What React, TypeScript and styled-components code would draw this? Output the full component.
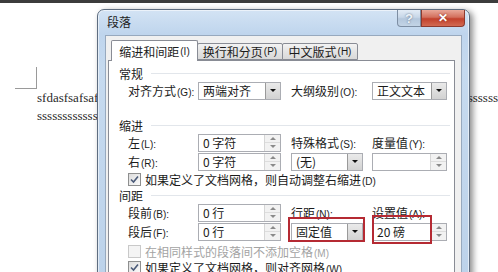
import React from 'react'
import styled, { createGlobalStyle } from 'styled-components'

const GlobalStyle = createGlobalStyle`
  html, body {
    margin: 0;
    padding: 0;
  }
  body {
    width: 498px;
    height: 272px;
    overflow: hidden;
    background: #ffffff;
    font-family: "Noto Sans CJK SC", "Liberation Sans", sans-serif;
  }
`

const Screen = styled.div`
  position: relative;
  width: 498px;
  height: 272px;
  overflow: hidden;
  background: #ffffff;
`

const TopStrip = styled.div`
  height: 3px;
  background: #3c3c3c;
`

const Doc = styled.div`
  padding: 64px 0 0 15px;
`

const CornerMark = styled.div`
  width: 21px;
  height: 21px;
  border-right: 1px solid #9a9a9a;
  border-bottom: 1px solid #9a9a9a;
`

const DocLine = styled.div`
  margin-left: 22px;
  height: 18px;
  line-height: 18px;
  font-family: "Liberation Serif", serif;
  font-size: 13px;
  color: #2a2a2a;
  white-space: nowrap;
`

const Dialog = styled.div`
  position: absolute;
  left: 97px;
  top: 9px;
  width: 371px;
  height: 275px;
  display: flex;
  flex-direction: column;
  border: 1px solid #5e6d80;
  border-radius: 7px 7px 0 0;
  background: linear-gradient(#d3e3f4, #bfd5ed 24px, #c6daef 60px, #bcd2ea);
  box-shadow: inset 0 0 0 1px rgba(255, 255, 255, 0.55), 3px 2px 6px rgba(0, 0, 0, 0.45);
`

const TitleBar = styled.div`
  height: 25px;
  display: flex;
  align-items: flex-start;
  flex-shrink: 0;
`

const Title = styled.div`
  margin: 5px 0 0 9px;
  font-size: 12px;
  line-height: 14px;
  color: #1d1d1d;
`

const CaptionButtons = styled.div`
  margin-left: auto;
  margin-right: 4px;
  display: flex;
`

const CaptionButton = styled.div<{ $close?: boolean }>`
  width: ${p => (p.$close ? 44 : 24)}px;
  height: 17px;
  display: flex;
  align-items: center;
  justify-content: center;
  box-sizing: border-box;
  border: 1px solid ${p => (p.$close ? '#8d3a2e' : '#7d8ea3')};
  border-top: none;
  border-radius: ${p => (p.$close ? '0 0 4px 0' : '0 0 0 4px')};
  background: ${p =>
    p.$close
      ? 'linear-gradient(#e9a899, #d3705d 45%, #c2412c 55%, #d26a52)'
      : 'linear-gradient(#e3ecf6, #c8d7e8 45%, #b4c7dc 55%, #c3d4e6)'};
  color: ${p => (p.$close ? '#ffffff' : '#eef3f9')};
  font-family: "Liberation Sans", sans-serif;
  font-weight: bold;
  font-size: ${p => (p.$close ? 12 : 13)}px;
  text-shadow: 0 0 2px ${p => (p.$close ? '#7a1e10' : '#53657b')};
`

const Client = styled.div`
  flex: 1;
  margin: 0 7px;
  display: flex;
  flex-direction: column;
  background: #f0f0f0;
  border: 1px solid #97a9be;
  border-bottom: none;
  padding: 4px 6px 0 2px;
`

const TabStrip = styled.div`
  height: 20px;
  display: flex;
  align-items: flex-end;
  padding-left: 3px;
  position: relative;
  z-index: 1;
`

const Tab = styled.div<{ $active?: boolean; $w: number }>`
  width: ${p => p.$w}px;
  height: ${p => (p.$active ? 21 : 17)}px;
  margin-bottom: ${p => (p.$active ? -1 : 0)}px;
  margin-left: ${p => (p.$active ? 0 : -1)}px;
  box-sizing: border-box;
  display: flex;
  align-items: center;
  justify-content: center;
  border: 1px solid #898c95;
  border-bottom: ${p => (p.$active ? 'none' : '1px solid #898c95')};
  border-radius: 2px 2px 0 0;
  background: ${p => (p.$active ? '#ffffff' : 'linear-gradient(#f3f3f3, #e4e4e4 50%, #d9d9d9)')};
  font-size: 12px;
  color: #1b1b1b;
  white-space: nowrap;
`

const Panel = styled.div`
  flex: 1;
  background: #ffffff;
  border: 1px solid #898c95;
  padding: 4px 0 0 10px;
`

const Heading = styled.div<{ $gap?: number }>`
  height: 16px;
  margin-top: ${p => p.$gap ?? 0}px;
  display: flex;
  align-items: center;
  font-size: 12px;
  color: #1b1b1b;

  &::after {
    content: '';
    flex: 1;
    height: 1px;
    margin: 0 4px 0 8px;
    background: #e2e6eb;
  }
`

const Grid = styled.div`
  display: grid;
  grid-template-columns: 70px 93px 81px 75px;
  grid-auto-rows: 19px;
  align-items: center;
  padding-left: 9px;
`

const Label = styled.div`
  font-size: 12px;
  color: #1b1b1b;
  white-space: nowrap;
`

const Key = styled.span`
  font-family: "Liberation Sans", sans-serif;
  font-size: 10px;
  color: inherit;
  margin-left: 1px;
`

const Field = styled.div<{ $w: number }>`
  position: relative;
  width: ${p => p.$w}px;
  height: 18px;
  box-sizing: border-box;
  display: flex;
  align-items: center;
  border: 1px solid #abadb3;
  background: #ffffff;
  font-size: 12px;
  color: #1b1b1b;
`

const FieldText = styled.span`
  flex: 1;
  padding-left: 4px;
  white-space: nowrap;
  overflow: hidden;
`

const DropButton = styled.div`
  width: 15px;
  height: 16px;
  box-sizing: border-box;
  display: flex;
  align-items: center;
  justify-content: center;
  border-left: 1px solid #9a9a9a;
  background: linear-gradient(#eaeaea, #d2d2d2);

  &::after {
    content: '';
    border-left: 3px solid transparent;
    border-right: 3px solid transparent;
    border-top: 3px solid #111111;
  }
`

const SpinButtons = styled.div`
  width: 15px;
  height: 16px;
  display: flex;
  flex-direction: column;
  border-left: 1px solid #d6d6d6;
`

const SpinHalf = styled.div<{ $down?: boolean }>`
  flex: 1;
  display: flex;
  align-items: center;
  justify-content: center;
  background: #f2f2f2;
  border-bottom: ${p => (p.$down ? 'none' : '1px solid #dddddd')};

  &::after {
    content: '';
    border-left: 3px solid transparent;
    border-right: 3px solid transparent;
    ${p => (p.$down ? 'border-top: 3px solid #8a8a8a;' : 'border-bottom: 3px solid #8a8a8a;')}
  }
`

const CheckRow = styled.div<{ $gap?: number; $disabled?: boolean }>`
  height: 16px;
  margin-top: ${p => p.$gap ?? 0}px;
  padding-left: 9px;
  display: flex;
  align-items: center;
  gap: 4px;
  font-size: 12px;
  color: ${p => (p.$disabled ? '#a3a3a3' : '#1b1b1b')};
  white-space: nowrap;
`

const Box = styled.div<{ $disabled?: boolean }>`
  width: 13px;
  height: 13px;
  box-sizing: border-box;
  display: flex;
  align-items: center;
  justify-content: center;
  border: 1px solid ${p => (p.$disabled ? '#c9c9c9' : '#8e8f8f')};
  background: ${p => (p.$disabled ? '#f4f4f4' : 'linear-gradient(135deg, #dcdcdc, #fbfbfb)')};
`

const Highlight = styled.div<{ $l: number; $t: number; $w: number; $h: number }>`
  position: absolute;
  left: ${p => p.$l}px;
  top: ${p => p.$t}px;
  width: ${p => p.$w}px;
  height: ${p => p.$h}px;
  box-sizing: border-box;
  border: 2px solid #b52a33;
  pointer-events: none;
`

const Select: React.FC<{ value: string; w: number; children?: React.ReactNode }> = ({ value, w, children }) => (
  <Field $w={w}>
    <FieldText>{value}</FieldText>
    <DropButton />
    {children}
  </Field>
)

const Spin: React.FC<{ value: string; w: number; children?: React.ReactNode }> = ({ value, w, children }) => (
  <Field $w={w}>
    <FieldText>{value}</FieldText>
    <SpinButtons>
      <SpinHalf />
      <SpinHalf $down />
    </SpinButtons>
    {children}
  </Field>
)

const Check: React.FC<{ checked?: boolean; disabled?: boolean; gap?: number; text: string; k: string }> = ({
  checked,
  disabled,
  gap,
  text,
  k,
}) => (
  <CheckRow $gap={gap} $disabled={disabled}>
    <Box $disabled={disabled}>
      {checked && (
        <svg width="9" height="9" viewBox="0 0 9 9">
          <path d="M1 4.5 L3.5 7 L8 1.5" fill="none" stroke="#4a5a78" strokeWidth="1.6" />
        </svg>
      )}
    </Box>
    <span>
      {text}
      <Key>({k})</Key>
    </span>
  </CheckRow>
)

const Caption: React.FC<{ text: string; k: string }> = ({ text, k }) => (
  <Label>
    {text}
    <Key>({k}):</Key>
  </Label>
)

const App: React.FC = () => (
  <Screen>
    <GlobalStyle />
    <TopStrip />
    <Doc>
      <CornerMark />
      <DocLine>sfdasfsafsaf{'s'.repeat(90)}</DocLine>
      <DocLine>{'s'.repeat(24)}</DocLine>
    </Doc>

    <Dialog>
      <TitleBar>
        <Title>段落</Title>
        <CaptionButtons>
          <CaptionButton>?</CaptionButton>
          <CaptionButton $close>✕</CaptionButton>
        </CaptionButtons>
      </TitleBar>
      <Client>
        <TabStrip>
          <Tab $active $w={87}>
            缩进和间距<Key>(I)</Key>
          </Tab>
          <Tab $w={86}>
            换行和分页<Key>(P)</Key>
          </Tab>
          <Tab $w={76}>
            中文版式<Key>(H)</Key>
          </Tab>
        </TabStrip>
        <Panel>
          <Heading>常规</Heading>
          <Grid>
            <Caption text="对齐方式" k="G" />
            <Select value="两端对齐" w={83} />
            <Caption text="大纲级别" k="O" />
            <Select value="正文文本" w={75} />
          </Grid>

          <Heading $gap={17}>缩进</Heading>
          <Grid>
            <Caption text="左" k="L" />
            <Spin value="0 字符" w={83} />
            <Caption text="特殊格式" k="S" />
            <Caption text="度量值" k="Y" />
            <Caption text="右" k="R" />
            <Spin value="0 字符" w={83} />
            <Select value="(无)" w={72} />
            <Spin value="" w={75} />
          </Grid>
          <Check checked text="如果定义了文档网格，则自动调整右缩进" k="D" />

          <Heading>间距</Heading>
          <Grid>
            <Caption text="段前" k="B" />
            <Spin value="0 行" w={83} />
            <Caption text="行距" k="N" />
            <Caption text="设置值" k="A" />
            <Caption text="段后" k="F" />
            <Spin value="0 行" w={83} />
            <Select value="固定值" w={72}>
              <Highlight $l={-4} $t={-7} $w={77} $h={25} />
            </Select>
            <Spin value="20 磅" w={75}>
              <Highlight $l={-1} $t={-9} $w={60} $h={29} />
            </Spin>
          </Grid>
          <Check gap={2} disabled text="在相同样式的段落间不添加空格" k="M" />
          <Check checked text="如果定义了文档网格，则对齐网格" k="W" />
        </Panel>
      </Client>
    </Dialog>
  </Screen>
)

export default App
